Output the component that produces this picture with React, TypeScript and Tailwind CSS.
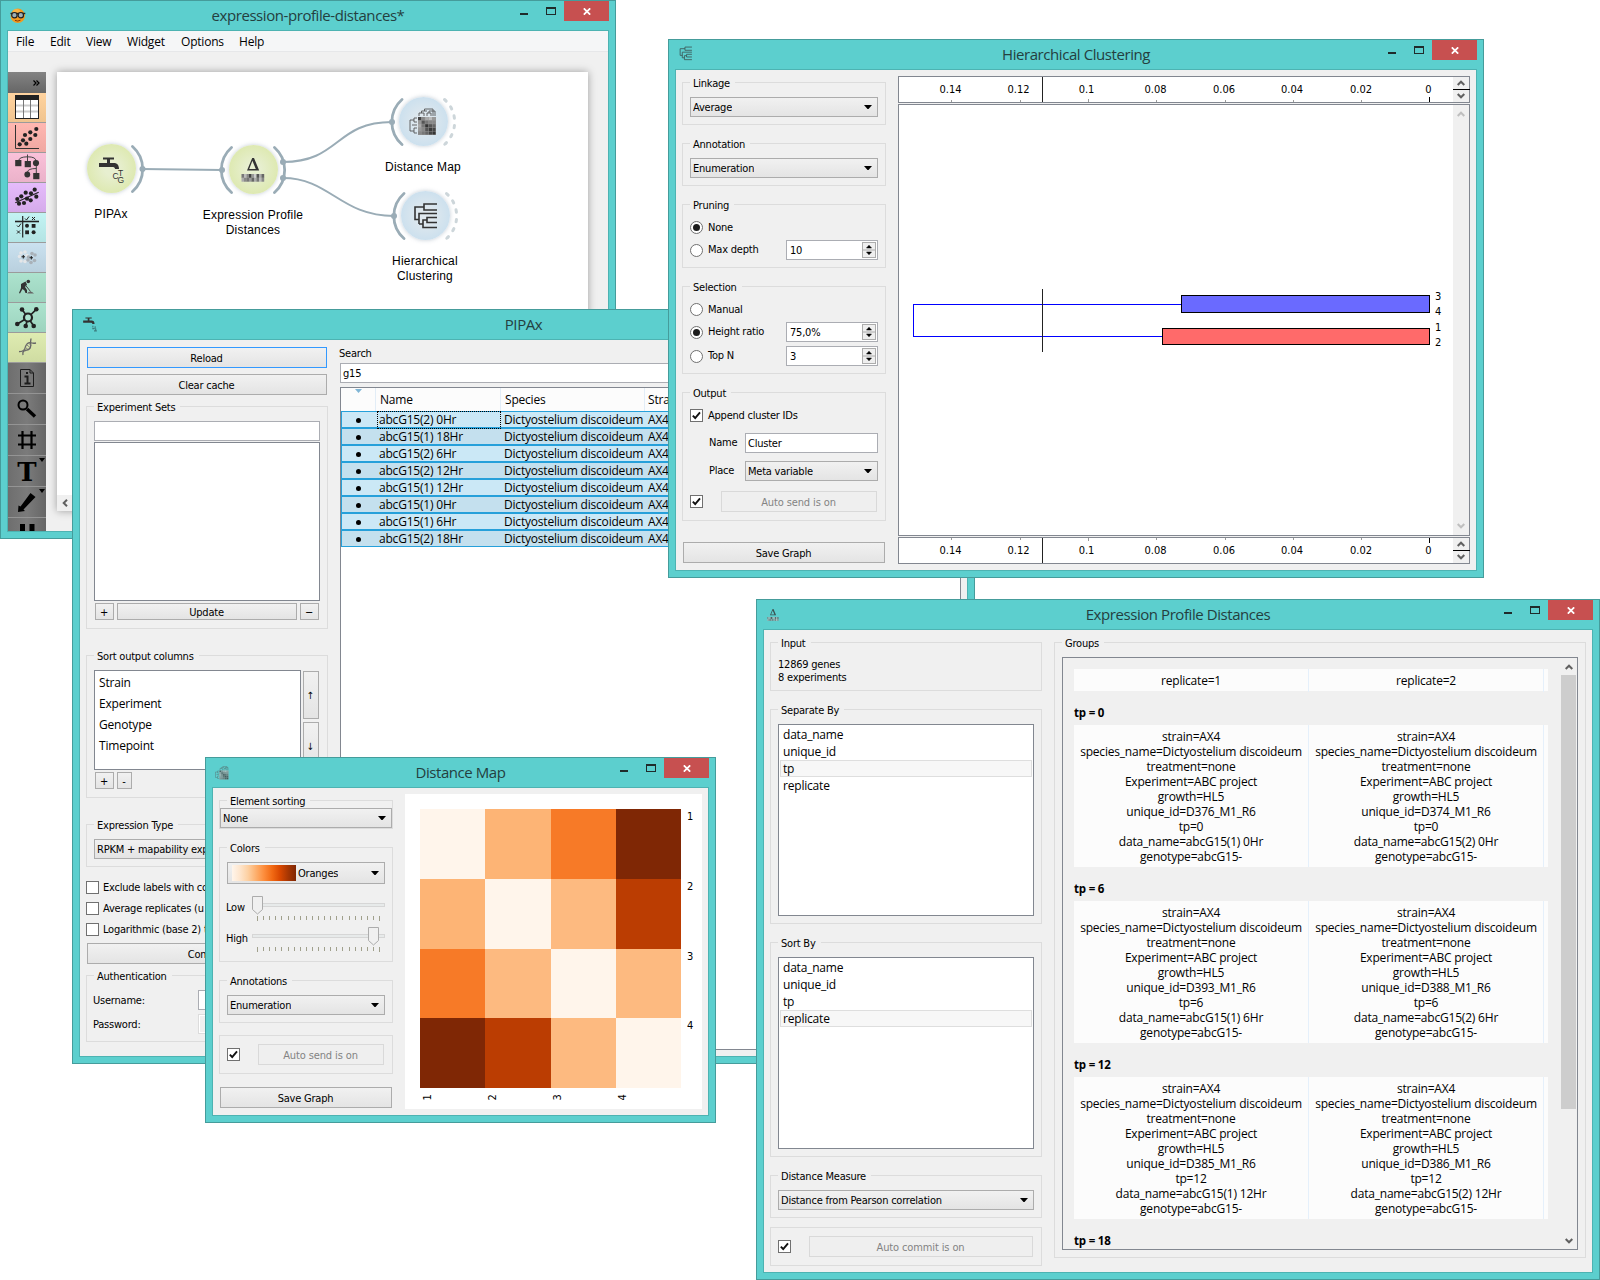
import React, { ReactNode } from "react";

const TAHOMA = "font-['DejaVu_Sans_Condensed','DejaVu_Sans',sans-serif] [font-stretch:condensed] text-[11px] tracking-[-0.22px]";
const SEGOE = "font-['Open_Sans','Noto_Sans',sans-serif] [font-stretch:normal] text-[12px] tracking-[-0.2px]";

/* ---------- basic controls ---------- */

function Win({ pos, title, icon, children }: { pos: string; title: string; icon: ReactNode; children: ReactNode }) {
  return (
    <section className={`absolute flex flex-col border border-[#459c9b] bg-[#5ccfce] px-[6px] pb-[6px] ${pos}`}>
      <header className="grid h-[29px] shrink-0 grid-cols-[140px_1fr_140px]">
        <div className="pl-[3px] pt-[6px]">{icon}</div>
        <h1 className="whitespace-nowrap text-center font-['Open_Sans','Noto_Sans',sans-serif] text-[15px] leading-[29px] tracking-[-0.43px] text-[#24403f]">
          {title}
        </h1>
        <div className="flex justify-end">
          <span className="mr-[18px] mt-[12px] h-[2px] w-[8px] bg-[#1f2b2b]" />
          <span className="mr-[8px] mt-[6px] h-[8px] w-[10px] border border-t-2 border-[#1f2b2b]" />
          <span className="flex h-[20px] w-[45px] items-center justify-center bg-[#c75050]">
            <svg width="8" height="7" viewBox="0 0 8 7">
              <path d="M0.8 0.3L7.2 6.7M7.2 0.3L0.8 6.7" stroke="#fff" strokeWidth="1.7" />
            </svg>
          </span>
        </div>
      </header>
      <div className="flex min-h-0 flex-1 overflow-hidden border border-[#4db3b2] bg-[#f0f0f0]">{children}</div>
    </section>
  );
}

function Group({ title, className, children }: { title: string; className: string; children?: ReactNode }) {
  return (
    <fieldset className={`shrink-0 border border-[#dcdcdc] px-[7px] ${className}`}>
      <legend className="h-[15px] whitespace-nowrap pl-[3px] pr-[5px] leading-[17px]">{title}</legend>
      {children}
    </fieldset>
  );
}

function Btn({ className = "", children }: { className?: string; children: ReactNode }) {
  return (
    <button className={`flex shrink-0 items-center justify-center border bg-linear-to-b from-[#f1f1f1] to-[#e4e4e4] pr-px pt-[2px] leading-none ${className}`}>
      {children}
    </button>
  );
}

function AutoBtn({ className, children }: { className: string; children: ReactNode }) {
  return (
    <button className={`flex h-[21px] items-center justify-center border border-[#d9d9d9] bg-[#efefef] pr-px pt-[2px] leading-none tracking-[-0.12px] text-[#838383] ${className}`}>
      {children}
    </button>
  );
}

function Select({ className = "", children }: { className?: string; children: ReactNode }) {
  return (
    <div className={`flex shrink-0 items-center justify-between border border-[#acacac] bg-linear-to-b from-[#f1f1f1] to-[#e4e4e4] pl-[2px] pr-[5px] ${className}`}>
      <span className="flex items-center overflow-hidden whitespace-nowrap pt-[2px]">{children}</span>
      <svg width="8" height="4" viewBox="0 0 8 4" className="shrink-0">
        <path d="M0 0H8L4.5 4H3.5Z" fill="#000" />
      </svg>
    </div>
  );
}

function Check({ on = false }: { on?: boolean }) {
  return (
    <span className="flex h-[13px] w-[13px] shrink-0 items-center justify-center border border-[#707070] bg-white">
      {on && (
        <svg width="9" height="9" viewBox="0 0 9 9">
          <path d="M0.8 4.6L3.2 7L8 1.4" fill="none" stroke="#111" strokeWidth="1.9" />
        </svg>
      )}
    </span>
  );
}

function Radio({ on = false, label }: { on?: boolean; label: string }) {
  return (
    <span className="flex items-center gap-[5px]">
      <span className="flex h-[13px] w-[13px] items-center justify-center rounded-full border border-[#707070] bg-white">
        {on && <span className="h-[7px] w-[7px] rounded-full bg-[#1c1c1c]" />}
      </span>
      <span className="pt-px">{label}</span>
    </span>
  );
}

function Spin({ value }: { value: string }) {
  return (
    <span className="flex h-[20px] w-[92px] items-center justify-between border border-[#abadb3] bg-white pl-[3px] pr-[1px] pt-px">
      <span className="pt-[2px]">{value}</span>
      <span className="mt-[-1px] flex h-[16px] w-[14px] flex-col border border-[#acacac] bg-[#efefef]">
        <svg width="12" height="14" viewBox="0 0 12 14">
          <path d="M3.5 5H8.5L6 2.2ZM3.5 9H8.5L6 11.8Z" fill="#000" stroke="#000" strokeWidth="0.5" />
          <path d="M0 7H12" stroke="#acacac" />
        </svg>
      </span>
    </span>
  );
}

function Chevron({ down = false, color = "#606060" }: { down?: boolean; color?: string }) {
  return (
    <svg width="8" height="6" viewBox="0 0 8 6" className="shrink-0">
      <path d={down ? "M0.7 1L4 4.3L7.3 1" : "M0.7 5L4 1.7L7.3 5"} fill="none" stroke={color} strokeWidth="2" />
    </svg>
  );
}

/* ---------- widget glyphs ---------- */

function Tap({ size, small = false }: { size: number; small?: boolean }) {
  return (
    <svg width={size} height={size} viewBox="0 0 28 28">
      <path d="M6 2.5H17V4.5H13V8H17C20 8 22 10 22 14H18C18 12.5 17 12 15 12H2V8H10V4.5H6Z" fill="#333" />
      {small ? (
        <path d="M19 17V20M23 18V22M18 22H22M21 26H26M24 22V27" stroke="#3c7f80" strokeWidth="2" />
      ) : (
        <g fontFamily="Liberation Sans" fontSize="8.5" fill="#333">
          <text x="15.5" y="23.5">C</text>
          <text x="21" y="20.5">T</text>
          <text x="20.5" y="27.5">G</text>
        </g>
      )}
    </svg>
  );
}

const STRIP = ["#777", "#bbb", "#888", "#444", "#999", "#ccc", "#555", "#aaa", "#666", "#aaa", "#888", "#777", "#999", "#666", "#aaa", "#777", "#bbb", "#888"];

function DeltaIcon({ size }: { size: number }) {
  return (
    <svg width={size} height={size} viewBox="0 0 28 28">
      <path d="M8 14.5L13.2 2H15L20.2 14.5ZM10.2 13H16.8L13.4 4.8Z" fill="#333" fillRule="evenodd" />
      {STRIP.map((c, i) => (
        <rect key={i} x={2.5 + (i % 9) * 2.5} y={18 + Math.floor(i / 9) * 3.8} width="2.7" height="3.9" fill={c} />
      ))}
    </svg>
  );
}

const MAP_CELLS = [
  "#444", "#888", "#aaa", "#bbb", "#999", "#999", "#555", "#777", "#888", "#888", "#aaa", "#777", "#333", "#555", "#666", "#999", "#888", "#555", "#3a3a3a", "#444", "#888", "#777", "#666", "#444", "#333",
];

function MapIcon({ size }: { size: number }) {
  return (
    <svg width={size} height={size} viewBox="0 0 28 28">
      <rect x="9" y="9" width="18" height="18" fill="#999" />
      {MAP_CELLS.map((c, i) => (
        <rect key={i} x={9 + (i % 5) * 3.6} y={9 + Math.floor(i / 5) * 3.6} width="3.2" height="3.2" fill={c} />
      ))}
      <path d="M10 8V5H15V8M12.5 5V3H18M18 8V5H22V8M15.5 3V1H24V8M20 5V3H26V8" fill="none" stroke="#555" strokeWidth="0.9" />
      <path d="M8 10H5V14H8M5 12H1V23H5M8 17H3M8 20H5V25H8" fill="none" stroke="#555" strokeWidth="0.9" />
    </svg>
  );
}

function TreeIcon({ size }: { size: number }) {
  return (
    <svg width={size} height={size} viewBox="0 0 28 28">
      <path d="M26 2H13V8H26M13 5H4V17.5H8M26 11.5H8V22M8 22H12M26 15.5H16V20.5H26M16 18H12V25.5H26" fill="none" stroke="#333" strokeWidth="1.6" />
    </svg>
  );
}

function Goggles() {
  return (
    <svg width="16" height="16" viewBox="0 0 16 16" className="mt-px">
      <circle cx="7.8" cy="7.8" r="7.2" fill="#f39a1f" />
      <circle cx="6.5" cy="5" r="4" fill="#ffc55e" opacity="0.6" />
      <path d="M0.5 5.5H15.3" stroke="#222" strokeWidth="1.4" />
      <circle cx="4.4" cy="7.2" r="2.7" fill="#9db0b8" stroke="#222" strokeWidth="1.2" />
      <circle cx="10.8" cy="7.2" r="2.7" fill="#9db0b8" stroke="#222" strokeWidth="1.2" />
      <path d="M5 12.4Q7.8 13.8 10.5 12.2" stroke="#8a3a06" fill="none" />
    </svg>
  );
}

/* ---------- canvas window ---------- */

const dots = (pts: number[][], r: number) => pts.map(([x, y], i) => <circle key={i} cx={x} cy={y} r={r} fill="#222" />);

const CATEGORIES: { bg: string; art: ReactNode }[] = [
  {
    bg: "bg-linear-to-b from-[#ffd39f] to-[#f0c48f]",
    art: (
      <g>
        <rect x="7.5" y="2.5" width="23" height="23" fill="#fff" stroke="#222" />
        <rect x="7" y="2" width="24" height="5" fill="#222" />
        <path d="M8 12.5H30M8 18.5H30" stroke="#ccc" strokeWidth="2" />
        <path d="M15.5 7V25M22.5 7V25" stroke="#777" />
      </g>
    ),
  },
  {
    bg: "bg-linear-to-b from-[#ffb7b1] to-[#f0a8a2]",
    art: (
      <g>
        <path d="M7.5 2V25.5H31" fill="none" stroke="#333" />
        {dots([[11.7, 21.3], [15, 17.3], [17, 12], [18.3, 20.7], [22.3, 9.3], [22.3, 16], [28.3, 6], [27.3, 12]], 2.1)}
      </g>
    ),
  },
  {
    bg: "bg-linear-to-b from-[#fac1d9] to-[#ebb2ca]",
    art: (
      <g fill="#333">
        <path d="M10.5 8Q11 3.8 19.5 3.8Q28 3.8 28 8M19.5 1.5V9M19.5 19Q20 15.5 28.3 15.5M28.3 12V21" fill="none" stroke="#444" />
        <rect x="7.2" y="7" width="6.2" height="6.2" />
        <rect x="16.7" y="8" width="6.2" height="6.2" />
        <circle cx="28" cy="10" r="3.1" />
        <circle cx="19.3" cy="21.5" r="2.9" />
        <rect x="25.2" y="20" width="6.2" height="6.2" />
      </g>
    ),
  },
  {
    bg: "bg-linear-to-b from-[#e5bbfb] to-[#d5abeb]",
    art: (
      <g>
        <path d="M7.3 19.7L30.7 9.3" stroke="#222" strokeWidth="1.2" />
        {dots([[13.3, 13.3], [17.7, 9.7], [23, 10.3], [26.7, 6.7], [28.3, 13.7], [22.7, 17.3], [16, 20], [11, 20.7], [9.3, 16], [19, 15.7]], 2.1)}
      </g>
    ),
  },
  {
    bg: "bg-linear-to-b from-[#c3f3f3] to-[#b3e4e4]",
    art: (
      <g>
        <path d="M7 8.5H31" stroke="#222" strokeWidth="1.6" />
        <path d="M14.7 3V24.5" stroke="#222" strokeWidth="1.2" />
        <path d="M17 5.5L18.5 7L21 3.5M9 12.5L10.5 14L13 10.5M24 4L27 7M27 4L24 7M9 17.5L12 20.5M12 17.5L9 20.5" fill="none" stroke="#222" />
        <circle cx="19" cy="12.7" r="2" fill="#222" />
        <rect x="23.7" y="11" width="3.8" height="3.8" fill="#222" />
        <rect x="17.2" y="17.4" width="3.8" height="3.8" fill="#222" />
        <circle cx="25.6" cy="19.2" r="2" fill="#222" />
      </g>
    ),
  },
  {
    bg: "bg-linear-to-b from-[#cae1ef] to-[#b9d0de]",
    art: (
      <g>
        {[[13, 10], [17, 9], [11.5, 13.5], [13, 18], [17, 18.5], [19, 12.5]].map(([x, y], i) => (
          <circle key={i} cx={x} cy={y} r="1.8" fill="#e4e6e8" />
        ))}
        {[[24, 10.5], [27, 12], [20, 17], [23, 19.5], [26.5, 17.5], [20.5, 14]].map(([x, y], i) => (
          <circle key={i} cx={x} cy={y} r="1.8" fill="#a9b1b8" />
        ))}
        <path d="M13.5 13.7H17M15.3 12V15.5M21.6 14.7H25M23.3 13V16.5" stroke="#222" strokeWidth="1.1" />
      </g>
    ),
  },
  {
    bg: "bg-linear-to-b from-[#ace3ce] to-[#9dd3be]",
    art: (
      <g>
        <circle cx="20.3" cy="8.5" r="1.8" fill="#333" />
        <path d="M13 11L17.5 8.5L19 11.5L17 14L19 17V20H17.5L16.5 17.5L14.5 16L12 20.5L11 20L13 15Z" fill="#333" />
        <path d="M17 11.5L22.5 18.5" stroke="#444" />
        <path d="M19 20.5Q22 16.5 26 20.5Z" fill="#666" />
      </g>
    ),
  },
  {
    bg: "bg-linear-to-b from-[#ace3ce] to-[#9dd3be]",
    art: (
      <g>
        <path d="M20 14.5L14 6.5M20 14.5L28.3 6.3M20 14.5L9.3 21M20 14.5L17.7 23M20 14.5L25.7 23" stroke="#222" strokeWidth="1.7" />
        {dots([[14, 6.5], [28.3, 6.3], [9.3, 21], [17.7, 23], [25.7, 23]], 2.3)}
        <circle cx="20" cy="14.5" r="4" fill="#ace3ce" stroke="#222" strokeWidth="2.2" />
      </g>
    ),
  },
  {
    bg: "bg-linear-to-b from-[#dfecb1] to-[#cfdca2]",
    art: (
      <g fill="none" stroke="#777">
        <path d="M11 18.5Q16.5 19 17.5 13.5Q19.5 8.5 24 10Q25.5 10.5 28 10" strokeWidth="1.3" stroke="#666" />
        <path d="M15 22Q14 17 19 17Q24 16 22.5 9.5L23 5.5" strokeWidth="1.3" stroke="#666" />
        <path d="M17 14L20.5 17M18.5 11.5L22.5 15M20.5 10L23 12.5M15.5 17L17 18.5" strokeWidth="0.9" />
      </g>
    ),
  },
];

const TOOLS: ReactNode[] = [
  <g fill="none" stroke="#1c1c1c">
    <path d="M12.5 6.5H22L25.5 10V23.5H12.5Z M22 6.5V10H25.5" />
    <path d="M16.5 13.5H19.5V20.5M16.5 20.5H22.5M19 9V11" strokeWidth="2" />
  </g>,
  <g stroke="#000" fill="none">
    <circle cx="15" cy="11" r="4.5" strokeWidth="2" />
    <path d="M19 15L27 22.5" strokeWidth="3.4" />
  </g>,
  <path d="M10 10.5H28M10 19.5H28M14.5 6V24M23.5 6V24" stroke="#000" strokeWidth="2.2" />,
  <g>
    <text x="19" y="25" textAnchor="middle" fontFamily="DejaVu Serif" fontWeight="bold" fontSize="26">T</text>
    <path d="M31 2H37L34 6Z" />
  </g>,
  <g>
    <path d="M10 25L10.5 18.5L12.5 19.5L22.5 6L27.5 10L15.5 22.5L17 24Z" />
    <path d="M31 2H37L34 6Z" />
  </g>,
  <path d="M12 6H17V26H12ZM21.5 6H26.5V26H21.5Z" />,
];

function Node({ pos, tint, label, icon }: { pos: string; tint: string; label: ReactNode; icon: ReactNode }) {
  return (
    <div className={`absolute flex w-[120px] flex-col items-center ${pos}`}>
      <div className={`flex h-[49px] w-[49px] items-center justify-center rounded-full shadow-[0_0_4px_rgba(120,140,160,0.45)] ${tint}`}>{icon}</div>
      <div className="mt-[14px] whitespace-nowrap text-center font-['Liberation_Sans',Arial,sans-serif] text-[12px] leading-[15px] tracking-[0.2px]">{label}</div>
    </div>
  );
}

const YELLOW = "bg-[radial-gradient(circle,#e7efd0_20%,#dce8ac_80%)]";
const BLUE = "bg-[radial-gradient(circle,#dfe8ee_20%,#c9dfee_80%)]";

function CanvasWindow() {
  return (
    <Win pos="left-0 top-0 w-[616px] h-[539px]" title="expression-profile-distances*" icon={<Goggles />}>
      <div className="flex w-full flex-col">
        <nav className={`flex h-[21px] shrink-0 border-b border-[#e6e7e9] bg-[#f5f6f7] pl-[8px] leading-[21px] ${SEGOE}`}>
          <span className="w-[34px]">File</span>
          <span className="w-[36px]">Edit</span>
          <span className="w-[41px]">View</span>
          <span className="w-[54px]">Widget</span>
          <span className="w-[58px]">Options</span>
          <span>Help</span>
        </nav>
        <div className="flex min-h-0 flex-1 pt-[20px]">
          <aside className="flex w-[38px] shrink-0 flex-col overflow-hidden">
            <div className="flex h-[21px] shrink-0 items-center justify-end bg-linear-to-b from-[#838383] to-[#666] pr-[6px]">
              <svg width="7" height="6" viewBox="0 0 7 6">
                <path d="M0.5 0.5L3 3L0.5 5.5M3.5 0.5L6 3L3.5 5.5" fill="none" stroke="#000" strokeWidth="1.2" />
              </svg>
            </div>
            {CATEGORIES.map((c, i) => (
              <div key={i} className={`h-[30px] shrink-0 border-b border-[#9b9b9b] ${c.bg}`}>
                <svg width="38" height="29" viewBox="0 0 38 29">{c.art}</svg>
              </div>
            ))}
            {TOOLS.map((t, i) => (
              <div key={i} className="h-[31px] shrink-0 border-b border-[#949494] bg-linear-to-r from-[#6e6e6e] via-[#7b7b7b] to-[#666]">
                <svg width="38" height="30" viewBox="0 0 38 30">{t}</svg>
              </div>
            ))}
          </aside>
          <div className="relative ml-[11px] h-[439px] w-[531px] bg-white shadow-[0_0_8px_rgba(0,0,0,0.35)]">
            <svg width="531" height="300" viewBox="57 72 531 300" className="absolute left-0 top-0" fill="none" stroke="#9aacb6">
              <path d="M142 169L222 170M283 162C340 162 335 122 392 122M283 178C330 178 340 216 394 216" strokeWidth="2" />
              <path d="M132.5 146.5A30 30 0 0 1 132.5 191.5M231.5 147.5A30 30 0 0 0 231.5 192.5M274.5 147.5A30 30 0 0 1 274.5 192.5M402 99.5A30 30 0 0 0 402 144.5M404 193.5A30 30 0 0 0 404 238.5" strokeWidth="2.8" strokeLinecap="round" />
              <path d="M444.5 99.5A30 30 0 0 1 444.5 144.5M446.5 193.5A30 30 0 0 1 446.5 238.5" stroke="#cdd6da" strokeWidth="3" strokeLinecap="round" strokeDasharray="2.4 7.2" />
              <g fill="#9aacb6" stroke="none">
                <circle cx="142.5" cy="169" r="3" />
                <circle cx="222" cy="170" r="3" />
                <circle cx="283" cy="162" r="3" />
                <circle cx="283" cy="178" r="3" />
                <circle cx="392" cy="122" r="3" />
                <circle cx="394" cy="216" r="3" />
              </g>
            </svg>
            <Node pos="left-[-6px] top-[72px]" tint={YELLOW} label="PIPAx" icon={<Tap size={28} />} />
            <Node pos="left-[136px] top-[73px]" tint={YELLOW} label={<>Expression Profile<br />Distances</>} icon={<DeltaIcon size={28} />} />
            <Node pos="left-[306px] top-[25px]" tint={BLUE} label="Distance Map" icon={<MapIcon size={28} />} />
            <Node pos="left-[308px] top-[119px]" tint={BLUE} label={<>Hierarchical<br />Clustering</>} icon={<TreeIcon size={28} />} />
            <div className="absolute bottom-0 left-0 flex h-[16px] w-full items-center bg-[#f0f0f0] pl-[5px]">
              <svg width="6" height="8" viewBox="0 0 6 8">
                <path d="M5 0.7L1.7 4L5 7.3" fill="none" stroke="#606060" strokeWidth="2" />
              </svg>
            </div>
          </div>
        </div>
      </div>
    </Win>
  );
}

/* ---------- PIPAx ---------- */

const EXPERIMENTS = ["abcG15(2) 0Hr", "abcG15(1) 18Hr", "abcG15(2) 6Hr", "abcG15(2) 12Hr", "abcG15(1) 12Hr", "abcG15(1) 0Hr", "abcG15(1) 6Hr", "abcG15(2) 18Hr"];

function PipaxWindow() {
  return (
    <Win pos="left-[72px] top-[309px] w-[903px] h-[755px]" title="PIPAx" icon={<Tap size={16} small />}>
      <div className={`flex w-full pl-[6px] ${TAHOMA}`}>
        <div className="flex w-[242px] shrink-0 flex-col pt-[7px]">
          <Btn className="mx-px h-[21px] border-[#3399ff]">Reload</Btn>
          <Btn className="mx-px mt-[6px] h-[21px] border-[#acacac]">Clear cache</Btn>
          <Group title="Experiment Sets" className="mt-[4px] h-[230px]">
            <div className="mt-[7px] h-[20px] border border-[#abadb3] bg-white" />
            <div className="mt-px h-[159px] border border-[#828790] bg-white" />
            <div className="mt-[2px] flex gap-[3px] px-px">
              <Btn className="h-[17px] w-[19px] border-[#acacac]">+</Btn>
              <Btn className="h-[17px] w-[180px] border-[#acacac]">Update</Btn>
              <Btn className="h-[17px] w-[19px] border-[#acacac]">−</Btn>
            </div>
          </Group>
          <Group title="Sort output columns" className="mt-[19px] h-[150px]">
            <div className="mt-[7px] flex gap-[2px]">
              <ul className={`h-[100px] w-[207px] border border-[#828790] bg-white pl-[4px] pt-[1px] leading-[21px] ${SEGOE}`}>
                <li>Strain</li>
                <li>Experiment</li>
                <li>Genotype</li>
                <li>Timepoint</li>
              </ul>
              <div className="flex flex-col gap-[3px] pt-px text-[10px]">
                <Btn className="h-[48px] w-[16px] border-[#acacac]">↑</Btn>
                <Btn className="h-[48px] w-[16px] border-[#acacac]">↓</Btn>
              </div>
            </div>
            <div className="mt-[2px] flex gap-[3px] px-px">
              <Btn className="h-[17px] w-[19px] border-[#acacac]">+</Btn>
              <Btn className="h-[17px] w-[15px] border-[#acacac]">-</Btn>
            </div>
          </Group>
          <Group title="Expression Type" className="mt-[19px] h-[50px]">
            <Select className="mt-[7px] h-[20px]">RPKM + mapability exp</Select>
          </Group>
          <div className="mt-[14px] flex flex-col gap-[8px]">
            {["Exclude labels with co", "Average replicates (u", "Logarithmic (base 2) t"].map((t) => (
              <label key={t} className="flex h-[13px] items-center gap-[4px] whitespace-nowrap">
                <Check />
                <span className="pt-[2px]">{t}</span>
              </label>
            ))}
          </div>
          <Btn className="mx-px mt-[7px] h-[21px] border-[#acacac]">Commit</Btn>
          <Group title="Authentication" className="mt-[4px] h-[74px]">
            <label className="ml-[-1px] mt-[7px] flex h-[20px] items-center justify-between">
              <span className="pt-[2px]">Username:</span>
              <span className="h-[20px] w-[122px] border border-[#abadb3] bg-white" />
            </label>
            <label className="ml-[-1px] mt-[4px] flex h-[20px] items-center justify-between">
              <span className="pt-[2px]">Password:</span>
              <span className="h-[20px] w-[122px] border border-[#dcdcdc] bg-[#f0f0f0] shadow-[inset_0_0_0_1px_#fff]" />
            </label>
          </Group>
        </div>
        <div className="ml-[12px] flex w-[621px] flex-col pt-[5px]">
          <span className="ml-[-1px] h-[16px] leading-[18px]">Search</span>
          <div className="mt-[2px] flex h-[20px] items-center border border-[#abadb3] bg-white pl-[2px] pt-[2px]">g15</div>
          <div className={`mt-[4px] h-[663px] border border-[#828790] bg-white ${SEGOE}`}>
            <div className="grid h-[23px] grid-cols-[35px_125px_144px_1fr] bg-[#fcfcfc] leading-[23px]">
              <span className="flex justify-center border-r border-[#e2edf7] pt-px">
                <svg width="7" height="4" viewBox="0 0 7 4">
                  <path d="M0 0H7L3.5 4Z" fill="#7fb5d5" />
                </svg>
              </span>
              <span className="border-r border-[#e2edf7] pl-[4px]">Name</span>
              <span className="border-r border-[#e2edf7] pl-[4px]">Species</span>
              <span className="pl-[3px]">Stra</span>
            </div>
            {EXPERIMENTS.map((name, i) => (
              <div
                key={name}
                className={`grid h-[17px] grid-cols-[36px_124px_144px_1fr] whitespace-nowrap border border-[#26a0da] leading-[16px] ${i % 2 ? "bg-[#c4e0ee]" : "bg-[#cbe8f6]"}`}
              >
                <span className="flex items-center justify-center pr-[3px]">
                  <i className="h-[5px] w-[5px] rounded-full bg-black" />
                </span>
                <span className={i === 0 ? "my-[-1px] ml-[-1px] mr-px border border-dotted border-black pl-[1px]" : "pl-[1px]"}>{name}</span>
                <span className="pl-[2px]">Dictyostelium discoideum</span>
                <span className="pl-[2px]">AX4</span>
              </div>
            ))}
          </div>
        </div>
      </div>
    </Win>
  );
}

/* ---------- hierarchical clustering ---------- */

const TICKS: [number, number, string][] = [
  [951, 950.5, "0.14"],
  [1020, 1018.5, "0.12"],
  [1088, 1086.5, "0.1"],
  [1156, 1155.5, "0.08"],
  [1225, 1224, "0.06"],
  [1293, 1292, "0.04"],
  [1361, 1361, "0.02"],
  [1429, 1428.5, "0"],
];

function Ruler({ bottom = false }: { bottom?: boolean }) {
  return (
    <div className="flex h-[27px] shrink-0 border border-[#828790] bg-white">
      <svg width="554" height="25" viewBox="899 0 554 25">
        {TICKS.map(([x, tx, t]) => {
          const len = t === "0" ? 5 : t === "0.1" ? 3 : 2;
          return (
            <g key={t}>
              <rect x={x} y={bottom ? 0 : 25 - len} width="1" height={len} fill={t === "0" ? "#000" : "#999"} />
              <text x={tx} y="16" textAnchor="middle" fontSize="11" letterSpacing="0">{t}</text>
            </g>
          );
        })}
        <rect x="1042" y="0" width="1" height="25" fill="#222" />
      </svg>
      <div className="flex w-[16px] flex-col items-center justify-between bg-[#f0f0f0]">
        <span className="mt-[3px] flex"><Chevron /></span>
        <span className="h-px w-[17px] bg-black" />
        <span className="mb-[3px] flex"><Chevron down /></span>
      </div>
    </div>
  );
}

function ClusteringWindow() {
  return (
    <Win pos="left-[668px] top-[39px] w-[816px] h-[539px]" title="Hierarchical Clustering" icon={<span className="block opacity-75"><TreeIcon size={15} /></span>}>
      <div className={`flex w-full pl-[6px] ${TAHOMA}`}>
        <div className="flex w-[204px] shrink-0 flex-col pt-[5px]">
          <Group title="Linkage" className="h-[50px]">
            <Select className="mt-[7px] h-[20px]">Average</Select>
          </Group>
          <Group title="Annotation" className="mt-[11px] h-[50px]">
            <Select className="mt-[7px] h-[20px]">Enumeration</Select>
          </Group>
          <Group title="Pruning" className="mt-[11px] h-[71px]">
            <div className="mt-[6px] flex h-[19px] items-center"><Radio on label="None" /></div>
            <div className="mt-[3px] flex h-[20px] items-center justify-between"><Radio label="Max depth" /><Spin value="10" /></div>
          </Group>
          <Group title="Selection" className="mt-[11px] h-[95px]">
            <div className="mt-[6px] flex h-[19px] items-center"><Radio label="Manual" /></div>
            <div className="mt-[3px] flex h-[20px] items-center justify-between"><Radio on label="Height ratio" /><Spin value="75,0%" /></div>
            <div className="mt-[4px] flex h-[20px] items-center justify-between"><Radio label="Top N" /><Spin value="3" /></div>
          </Group>
          <Group title="Output" className="mt-[11px] h-[136px]">
            <label className="mt-[9px] flex h-[13px] items-center gap-[5px]"><Check on /><span className="pt-[2px]">Append cluster IDs</span></label>
            <div className="mt-[11px] flex h-[20px] items-center justify-between pl-[19px]">
              <span className="pt-px">Name</span>
              <span className="flex h-[20px] w-[133px] items-center border border-[#abadb3] bg-white pl-[2px] pt-[3px]">Cluster</span>
            </div>
            <div className="mt-[8px] flex h-[20px] items-center justify-between pl-[19px]">
              <span className="pt-px">Place</span>
              <Select className="h-[20px] w-[133px]">Meta variable</Select>
            </div>
            <div className="mt-[10px] flex items-center justify-between pr-px"><Check on /><AutoBtn className="w-[156px]">Auto send is on</AutoBtn></div>
          </Group>
          <Btn className="mx-px mt-[21px] h-[21px] border-[#acacac]">Save Graph</Btn>
        </div>
        <div className="ml-[12px] flex w-[572px] flex-col gap-px pt-[6px]">
          <Ruler />
          <div className="flex h-[432px] shrink-0 border border-[#828790] bg-white">
            <svg width="554" height="430" viewBox="899 105 554 430" shapeRendering="crispEdges">
              <path d="M1181 304.5H913.5V336.5H1162" fill="none" stroke="#00f" />
              <rect x="1042" y="289" width="1" height="63" fill="#222" />
              <rect x="1181.5" y="295.5" width="248" height="17" fill="#6a6aff" stroke="#000" />
              <rect x="1162.5" y="328.5" width="267" height="16" fill="#ff6a6a" stroke="#000" />
              <g fontSize="11">
                <text x="1435" y="300">3</text>
                <text x="1435" y="315">4</text>
                <text x="1435" y="331">1</text>
                <text x="1435" y="346">2</text>
              </g>
            </svg>
            <div className="flex w-[16px] flex-col items-center justify-between bg-[#f0f0f0] py-[6px]">
              <Chevron color="#bfbfbf" />
              <Chevron down color="#bfbfbf" />
            </div>
          </div>
          <Ruler bottom />
        </div>
      </div>
    </Win>
  );
}

/* ---------- distance map ---------- */

const HEAT = [
  "bg-[#fff5eb]", "bg-[#fdb475]", "bg-[#f77a27]", "bg-[#7f2705]",
  "bg-[#fdb475]", "bg-[#fff5eb]", "bg-[#fdba80]", "bg-[#bb3d02]",
  "bg-[#f77a27]", "bg-[#fdba80]", "bg-[#fff5eb]", "bg-[#fdba80]",
  "bg-[#7f2705]", "bg-[#bb3d02]", "bg-[#fdba80]", "bg-[#fff5eb]",
];

function Slider({ label, at, className }: { label: string; at: number; className: string }) {
  return (
    <div className={`ml-[-1px] flex h-[25px] ${className}`}>
      <span className="w-[26px] leading-[24px]">{label}</span>
      <svg width="133" height="25" viewBox="0 0 133 25">
        <rect x="0.5" y="7.5" width="132" height="3" fill="#e7eaea" stroke="#d6d6d6" />
        <path d={`M${at + 0.5} 0.5H${at + 10.5}V13.5L${at + 5.5} 18L${at + 0.5} 13.5Z`} fill="#f0f0f0" stroke="#acacac" />
        {Array.from({ length: 21 }, (_, i) => (
          <rect key={i} x={Math.round(5 + i * 6.1)} y="20" width="1" height={i % 20 ? 4 : 5} fill="#a0a08c" />
        ))}
      </svg>
    </div>
  );
}

function MapWindow() {
  return (
    <Win pos="left-[205px] top-[757px] w-[511px] h-[366px]" title="Distance Map" icon={<span className="block pt-[2px] opacity-75"><MapIcon size={14} /></span>}>
      <div className={`flex w-full pl-[6px] ${TAHOMA}`}>
        <div className="flex w-[174px] shrink-0 flex-col pt-[5px]">
          <Group title="Element sorting" className="h-[36px]">
            <Select className="mx-[-7px] h-[20px]">None</Select>
          </Group>
          <Group title="Colors" className="mt-[11px] h-[122px]">
            <Select className="mt-[7px] h-[22px]">
              <span className="ml-[2px] mr-[2px] mt-[-2px] h-[16px] w-[64px] bg-[linear-gradient(90deg,#fff5eb,#fee6ce_12%,#fdd0a2_25%,#fdae6b_38%,#fd8d3c_50%,#f16913_63%,#d94801_75%,#a63603_88%,#7f2704)]" />
              Oranges
            </Select>
            <Slider label="Low" at={0} className="mt-[12px]" />
            <Slider label="High" at={116} className="mt-[6px]" />
          </Group>
          <Group title="Annotations" className="mt-[11px] h-[50px]">
            <Select className="mt-[7px] h-[20px]">Enumeration</Select>
          </Group>
          <div className="mt-[12px] flex h-[39px] shrink-0 items-center justify-between border border-[#dcdcdc] pl-[7px] pr-[8px]">
            <Check on />
            <AutoBtn className="w-[126px]">Auto send is on</AutoBtn>
          </div>
          <Btn className="mx-px mt-[13px] h-[21px] border-[#acacac]">Save Graph</Btn>
        </div>
        <div className="ml-[12px] mt-[6px] h-[315px] w-[297px] bg-white pl-[15px] pt-[15px]">
          <div className="flex">
            <div className="grid grid-cols-[65px_66px_65px_65px] grid-rows-[70px_70px_69px_70px]">
              {HEAT.map((c, i) => (
                <span key={i} className={c} />
              ))}
            </div>
            <div className="grid grid-rows-[70px_70px_69px_70px] pl-[6px] leading-[16px]">
              <span>1</span>
              <span>2</span>
              <span>3</span>
              <span>4</span>
            </div>
          </div>
          <div className="grid grid-cols-[65px_65px_65px_65px] pt-[5px]">
            {["1", "2", "3", "4"].map((n) => (
              <span key={n} className="h-[9px] w-[14px] -rotate-90 text-center leading-[9px]">{n}</span>
            ))}
          </div>
        </div>
      </div>
    </Win>
  );
}

/* ---------- expression profile distances ---------- */

const VARS = ["data_name", "unique_id", "tp", "replicate"];

function VarList({ selected }: { selected: string }) {
  return (
    <ul className={`mt-[7px] h-[192px] border border-[#828790] bg-white p-px ${SEGOE}`}>
      {VARS.map((v) => (
        <li key={v} className={`h-[17px] border pl-[2px] leading-[16px] ${v === selected ? "border-[#dedede] bg-[#f7f7f7]" : "border-transparent"}`}>
          {v}
        </li>
      ))}
    </ul>
  );
}

const BLOCKS = [
  { tp: "0", ids: ["D376", "D374"] },
  { tp: "6", ids: ["D393", "D388"] },
  { tp: "12", ids: ["D385", "D386"] },
];

function ProfileWindow() {
  return (
    <Win pos="left-[756px] top-[599px] w-[844px] h-[681px]" title="Expression Profile Distances" icon={<span className="block pt-[2px] opacity-80"><DeltaIcon size={14} /></span>}>
      <div className={`flex w-full pl-[6px] ${TAHOMA}`}>
        <div className="flex w-[272px] shrink-0 flex-col pt-[5px]">
          <Group title="Input" className="h-[56px]">
            <p className="mt-[8px] leading-[13px]">
              12869 genes
              <br />8 experiments
            </p>
          </Group>
          <Group title="Separate By" className="mt-[11px] h-[222px]"><VarList selected="tp" /></Group>
          <Group title="Sort By" className="mt-[11px] h-[222px]"><VarList selected="replicate" /></Group>
          <Group title="Distance Measure" className="mt-[11px] h-[50px]">
            <Select className="mt-[7px] h-[20px]">Distance from Pearson correlation</Select>
          </Group>
          <div className="mt-[9px] flex h-[39px] shrink-0 items-center justify-between border border-[#dcdcdc] pl-[7px] pr-[8px]">
            <Check on />
            <AutoBtn className="w-[224px]">Auto commit is on</AutoBtn>
          </div>
        </div>
        <Group title="Groups" className="ml-[12px] mt-[5px] h-[623px] w-[532px]">
          <div className="mt-[7px] flex h-[593px] overflow-hidden border border-[#828790]">
            <div className={`w-[498px] pl-[11px] pt-[11px] text-center ${SEGOE}`}>
              <div className="grid h-[22px] w-[474px] grid-cols-[235px_235px_4px] bg-[#fcfcfc] leading-[23px]">
                <span className="border-r border-[#e5f0fb]">replicate=1</span>
                <span className="border-r border-[#e5f0fb]">replicate=2</span>
              </div>
              {BLOCKS.map((b) => (
                <div key={b.tp}>
                  <h2 className="h-[34px] pt-[14px] text-left text-[11.5px] font-bold leading-[16px]">tp = {b.tp}</h2>
                  <div className="grid h-[142px] w-[474px] grid-cols-[235px_235px_4px] bg-[#fcfcfc] leading-[15px]">
                    {b.ids.map((id, i) => (
                      <div key={id} className="whitespace-nowrap border-r border-[#e5f0fb] pt-[4px]">
                        strain=AX4<br />
                        species_name=Dictyostelium discoideum<br />
                        treatment=none<br />
                        Experiment=ABC project<br />
                        growth=HL5<br />
                        unique_id={id}_M1_R6<br />
                        tp={b.tp}<br />
                        data_name=abcG15({i + 1}) {b.tp}Hr<br />
                        genotype=abcG15-
                      </div>
                    ))}
                  </div>
                </div>
              ))}
              <h2 className="pt-[14px] text-left text-[11.5px] font-bold leading-[16px]">tp = 18</h2>
            </div>
            <div className="flex w-[16px] flex-col items-center bg-[#f0f0f0]">
              <span className="flex h-[17px] items-center"><Chevron /></span>
              <span className="h-[434px] w-[15px] self-start bg-[#cdcdcd]" />
              <span className="mt-auto flex h-[17px] items-center"><Chevron down /></span>
            </div>
          </div>
        </Group>
      </div>
    </Win>
  );
}

export default function App() {
  return (
    <main className="relative h-[1280px] w-[1600px] overflow-hidden bg-white text-black">
      <CanvasWindow />
      <PipaxWindow />
      <ClusteringWindow />
      <MapWindow />
      <ProfileWindow />
    </main>
  );
}
